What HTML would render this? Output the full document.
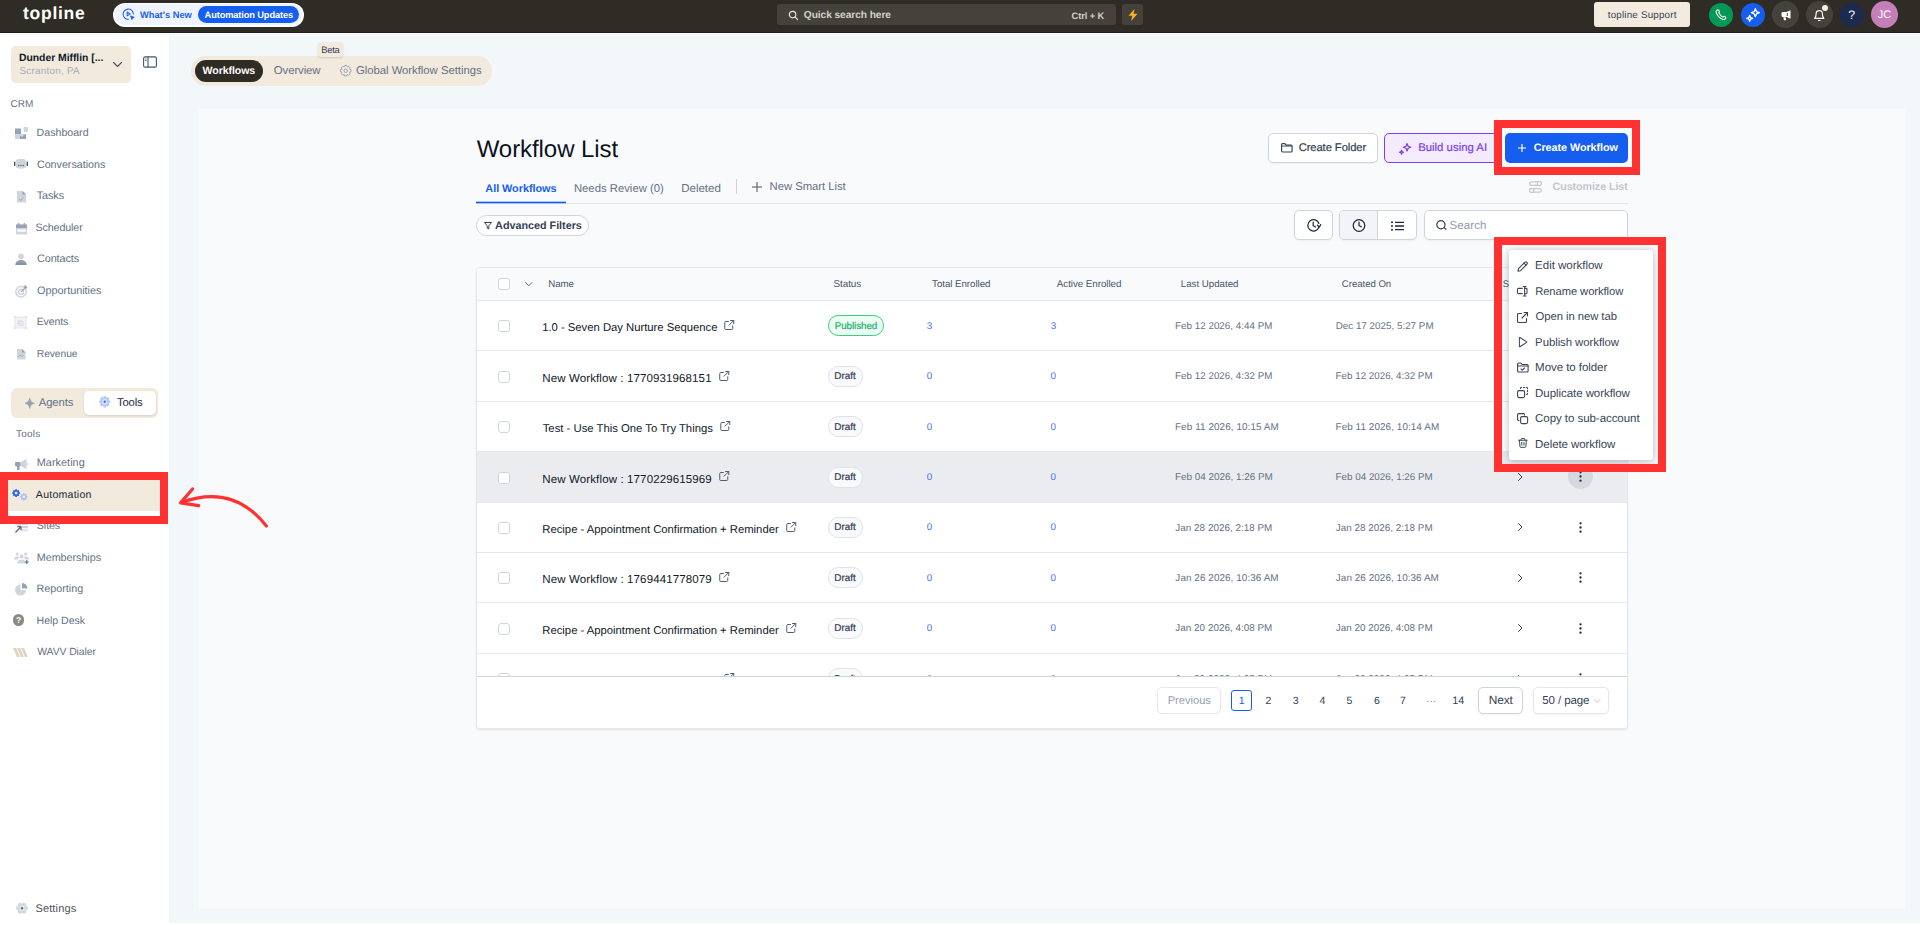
<!DOCTYPE html>
<html lang="en">
<head>
<meta charset="utf-8">
<title>Workflow List</title>
<style>
*{box-sizing:border-box;margin:0;padding:0}
html,body{width:1920px;height:925px;overflow:hidden;background:#fff}
body{font-family:"Liberation Sans",sans-serif;color:#344054;position:relative;font-size:11px;text-rendering:geometricPrecision}
.abs{position:absolute}
.t{position:absolute;white-space:nowrap;line-height:1}
svg{position:absolute;overflow:visible}
</style>
</head>
<body>
<div class="abs" style="left:0px;top:0px;width:1920px;height:32px;background:#2f2c25;"></div>
<div class="abs" style="left:0px;top:32px;width:1920px;height:1px;background:#221f18;"></div>
<div class="abs" style="left:169px;top:34px;width:1751px;height:889px;background:#f2f7fa;"></div>
<div class="abs" style="left:199px;top:109px;width:1706px;height:800px;background:#f9fafb;"></div>
<div class="t" style="left:23.08px;top:5px;font-size:17.5px;color:#fff;font-weight:bold;letter-spacing:0.713px;">topline</div>
<div class="abs" style="left:112.5px;top:2.5px;width:191.0px;height:24.0px;background:#fff;border-radius:12px;"></div>
<div class="abs" style="left:114px;top:4px;width:188px;height:21px;background:#eef3ff;border-radius:10.5px;"></div>
<svg style="left:122px;top:8px" width="13" height="13" viewBox="0 0 24 24" fill="none" stroke="#2563eb" stroke-width="2" stroke-linecap="round" stroke-linejoin="round"><path d="M21 11a9.500 9.500 0 1 0-9.500 10"/><path d="M9.500 7.500v7l5.500-3.500z"/><path d="M16 15l6 2.200-2.600 1.100-1.100 2.700z" fill="#2563eb"/></svg>
<div class="t" style="left:139.95px;top:11px;font-size:9.3px;color:#1d5fe8;font-weight:bold;letter-spacing:0.005px;">What's New</div>
<div class="abs" style="left:198px;top:6px;width:101px;height:17px;background:#155eef;border-radius:8.5px;"></div>
<div class="t" style="left:204.62px;top:11px;font-size:9.3px;color:#fff;font-weight:bold;letter-spacing:-0.140px;">Automation Updates</div>
<div class="abs" style="left:777px;top:4px;width:338.5px;height:21px;background:#45423b;border-radius:3px;"></div>
<svg style="left:787.5px;top:9.5px" width="10.5" height="10.5" viewBox="0 0 24 24" fill="none" stroke="#e8e8e4" stroke-width="2.600" stroke-linecap="round"><circle cx="10.500" cy="10.500" r="7.500"/><path d="M16.500 16.500L22 22"/></svg>
<div class="t" style="left:803.83px;top:11px;font-size:10.2px;color:#d2d1cd;font-weight:bold;letter-spacing:-0.074px;">Quick search here</div>
<div class="t" style="left:1071.59px;top:12px;font-size:9.3px;color:#d2d1cd;font-weight:bold;letter-spacing:-0.083px;">Ctrl + K</div>
<div class="abs" style="left:1122px;top:4px;width:21px;height:21px;background:#45423b;border-radius:3px;"></div>
<svg style="left:1128px;top:8.5px" width="10" height="12" viewBox="0 0 10 12" ><path d="M6.500 0L0.500 6.800H4.200L3.200 12L9.500 4.800H5.600z" fill="#fdb022"/></svg>
<div class="abs" style="left:1594px;top:2px;width:96px;height:25px;background:#f2ebde;border-radius:3px;"></div>
<div class="t" style="left:1607.83px;top:11px;font-size:9.8px;color:#3a4252;letter-spacing:0.187px;">topline Support</div>
<div class="abs" style="left:1709px;top:3px;width:24px;height:24px;background:#039855;border-radius:12px;"></div>
<svg style="left:1714.5px;top:8.5px" width="13" height="13" viewBox="0 0 24 24" fill="none" stroke="#fff" stroke-width="2" stroke-linecap="round" stroke-linejoin="round"><path d="M8.380 8.853a12.500 12.500 0 0 0 2.400 3.400 12.500 12.500 0 0 0 3.400 2.400c.1.050.16.070.23.090.24.070.53.020.73-.12.060-.04.110-.09.210-.19.310-.31.460-.46.610-.56a2 2 0 0 1 2.180 0c.15.100.3.250.61.560l.17.170c.47.470.7.700.83.950a2 2 0 0 1 0 1.800c-.13.250-.36.480-.83.950l-.14.140c-.47.470-.7.700-1.020.88-.35.200-.9.340-1.300.34-.37 0-.62-.070-1.120-.21a19.030 19.030 0 0 1-8.280-4.870 19.030 19.030 0 0 1-4.870-8.280c-.14-.5-.21-.750-.21-1.120 0-.4.140-.95.340-1.300.18-.32.410-.55.880-1.020l.14-.14c.47-.47.700-.7.950-.83a2 2 0 0 1 1.800 0c.25.130.48.360.95.830l.17.170c.31.310.46.460.56.610a2 2 0 0 1 0 2.180c-.1.150-.25.300-.56.610-.1.100-.15.150-.19.210-.14.200-.19.490-.12.730.2.070.4.130.9.230z"/></svg>
<div class="abs" style="left:1741px;top:3px;width:24px;height:24px;background:#155eef;border-radius:12px;"></div>
<svg style="left:1745px;top:7px" width="16" height="16" viewBox="0 0 24 24" fill="none" stroke="#fff" stroke-width="2" stroke-linejoin="round"><path d="M15.500 2.500l1.700 4.300 4.300 1.700-4.300 1.700-1.700 4.300-1.700-4.300-4.300-1.700 4.300-1.700z"/><path d="M7 12.500l1.200 3.300 3.300 1.200-3.300 1.200L7 21.500l-1.200-3.300-3.300-1.200 3.300-1.200z"/></svg>
<div class="abs" style="left:1772px;top:1px;width:27px;height:27px;background:#45423b;border-radius:13.5px;"></div>
<svg style="left:1779.5px;top:8.5px" width="12" height="12" viewBox="0 0 24 24" ><path d="M21 2.500v17l-8-3.500H5.500a2.500 2.500 0 0 1-2.500-2.500v-5A2.500 2.500 0 0 1 5.500 6H13z" fill="#fff"/><path d="M6.500 16.500h5l1 6h-4.500z" fill="#fff"/><path d="M14.500 8v6" stroke="#45423b" stroke-width="2"/></svg>
<div class="abs" style="left:1806px;top:1px;width:27px;height:27px;background:#45423b;border-radius:13.5px;"></div>
<svg style="left:1813px;top:8.5px" width="12.5" height="13" viewBox="0 0 24 24" fill="none" stroke="#fff" stroke-width="2.200" stroke-linecap="round" stroke-linejoin="round"><path d="M18 8.500a6 6 0 0 0-12 0c0 7-3 9-3 9h18s-3-2-3-9z"/><path d="M10.500 21.500h3"/></svg>
<div class="abs" style="left:1822px;top:4.8px;width:6.4px;height:6.4px;background:#f7efe2;border-radius:3.2px;"></div>
<div class="abs" style="left:1840px;top:3px;width:24px;height:24px;background:#1d2a4f;border-radius:12px;"></div>
<div class="t" style="left:1848.28px;top:9px;font-size:12.3px;color:#fff;">?</div>
<div class="abs" style="left:1871px;top:1px;width:27px;height:27px;background:#c57fb8;border-radius:13.5px;"></div>
<div class="t" style="left:1877.68px;top:10px;font-size:11px;color:#fff;">JC</div>
<div class="abs" style="left:11px;top:46px;width:120px;height:37px;background:#f1eadd;border-radius:5px;"></div>
<div class="t" style="left:19.02px;top:54px;font-size:10.4px;color:#101828;font-weight:bold;letter-spacing:-0.033px;">Dunder Mifflin [...</div>
<div class="t" style="left:19.41px;top:67px;font-size:9.9px;color:#a5acb9;letter-spacing:0.252px;">Scranton, PA</div>
<svg style="left:113px;top:62px" width="9" height="5" viewBox="0 0 9 5" fill="none" stroke="#475467" stroke-width="1.100" stroke-linecap="round" stroke-linejoin="round"><path d="M0.500 0.500L4.500 4.500L8.500 0.500"/></svg>
<svg style="left:143px;top:56.2px" width="14" height="12" viewBox="0 0 14 11.5" fill="none" stroke="#475467" stroke-width="1.100"><rect x="0.600" y="0.600" width="12.800" height="10.300" rx="1.500"/><path d="M5 0.600v10.300"/><path d="M2.200 2.800h1.200M2.200 4.300h1.200"/></svg>
<div class="t" style="left:10.50px;top:100px;font-size:10px;color:#667085;letter-spacing:0.073px;">CRM</div>
<div class="t" style="left:36.62px;top:128px;font-size:10.6px;color:#667085;letter-spacing:0.015px;">Dashboard</div>
<div class="t" style="left:36.97px;top:160px;font-size:10.7px;color:#667085;letter-spacing:-0.005px;">Conversations</div>
<div class="t" style="left:36.75px;top:191px;font-size:10.9px;color:#667085;letter-spacing:-0.121px;">Tasks</div>
<div class="t" style="left:35.48px;top:223px;font-size:10.7px;color:#667085;letter-spacing:-0.105px;">Scheduler</div>
<div class="t" style="left:36.96px;top:254px;font-size:10.9px;color:#667085;letter-spacing:-0.121px;">Contacts</div>
<div class="t" style="left:37.09px;top:286px;font-size:10.9px;color:#667085;letter-spacing:-0.032px;">Opportunities</div>
<div class="t" style="left:36.72px;top:317px;font-size:10.5px;color:#667085;letter-spacing:-0.107px;">Events</div>
<div class="t" style="left:36.77px;top:350px;font-size:10.3px;color:#667085;letter-spacing:-0.074px;">Revenue</div>
<svg style="left:15px;top:127px" width="13" height="12" viewBox="0 0 13 12" ><rect x="0" y="1.500" width="6" height="5.500" fill="#98a2b3"/><rect x="0" y="7" width="11" height="5" fill="#d0d5dd"/><path d="M5 12V8.500l2 1.500 3-3 1 1v4z" fill="#98a2b3"/><rect x="8.500" y="0" width="4.500" height="5" rx="1" fill="#d0d5dd"/></svg>
<svg style="left:13.5px;top:159px" width="14" height="10" viewBox="0 0 14 10" ><rect x="1.500" y="0" width="11" height="9.500" rx="3.500" fill="#d0d5dd"/><rect x="0" y="2.500" width="1.300" height="4.500" rx="0.600" fill="#475467"/><rect x="12.700" y="2.500" width="1.300" height="4.500" rx="0.600" fill="#475467"/><circle cx="4.800" cy="6.500" r="0.650" fill="#475467"/><circle cx="7" cy="6.500" r="0.650" fill="#475467"/><circle cx="9.200" cy="6.500" r="0.650" fill="#475467"/></svg>
<svg style="left:17px;top:190.5px" width="9" height="11.5" viewBox="0 0 9 11.5" ><path d="M0 0h5.500L9 3.500V11.500H0z" fill="#d0d5dd"/><path d="M5.500 0L9 3.500H5.500z" fill="#98a2b3"/><path d="M2.300 8l1.500 1.500 2.700-3" stroke="#98a2b3" stroke-width="0.900" fill="none"/></svg>
<svg style="left:16px;top:222.5px" width="11" height="11.5" viewBox="0 0 11 11.5" ><rect x="0" y="1.500" width="11" height="10" rx="1" fill="#d0d5dd"/><rect x="0" y="1.500" width="11" height="3.500" fill="#98a2b3"/><rect x="2" y="0" width="1.300" height="2.500" fill="#98a2b3"/><rect x="7.700" y="0" width="1.300" height="2.500" fill="#98a2b3"/><rect x="1.300" y="6.500" width="8.400" height="2.200" fill="#fff"/></svg>
<svg style="left:15px;top:253px" width="12" height="12" viewBox="0 0 12 12" ><circle cx="6" cy="3.200" r="2.800" fill="#d0d5dd"/><path d="M0.500 12c0-3.200 2.300-5 5.500-5s5.500 1.800 5.500 5z" fill="#98a2b3"/><path d="M0.500 12c0-1 .3-2 .8-2.600h9.400c.5.600.8 1.600.8 2.600z" fill="#8a93a6"/></svg>
<svg style="left:15.2px;top:285px" width="12.5" height="12.5" viewBox="0 0 12.5 12.5" ><circle cx="6" cy="6.800" r="5.200" fill="none" stroke="#cfd4dc" stroke-width="1.500"/><circle cx="6" cy="6.800" r="2.500" fill="none" stroke="#cfd4dc" stroke-width="1.400"/><path d="M6 6.800L10.500 2.300" stroke="#98a2b3" stroke-width="1.200"/><path d="M8.500 1.500L11 0l.3 1.700 1.200.3-1.500 2z" fill="#98a2b3"/></svg>
<svg style="left:14px;top:316px" width="13" height="13" viewBox="0 0 13 13" ><rect x="1" y="1" width="11" height="11" fill="#f2f4f7" stroke="#e4e7ec" stroke-width="1"/><rect x="3.300" y="3.800" width="5" height="5" fill="#dfe3ea"/><rect x="5" y="5.500" width="4.200" height="4.200" fill="#e6e9ee" stroke="#d9dde5" stroke-width="0.600"/><rect x="0" y="0" width="2.200" height="2.200" fill="#dfe3ea"/><rect x="10.800" y="0" width="2.200" height="2.200" fill="#dfe3ea"/><rect x="0" y="10.800" width="2.200" height="2.200" fill="#dfe3ea"/><rect x="10.800" y="10.800" width="2.200" height="2.200" fill="#dfe3ea"/></svg>
<svg style="left:17px;top:349px" width="8.5" height="10.5" viewBox="0 0 8.5 10.5" ><path d="M0 0h5L8.500 3.500V10.500H0z" fill="#d0d5dd"/><path d="M5 0L8.500 3.500H5z" fill="#98a2b3"/><path d="M1.500 7.500l1.500-1.500 1.500 1.200 2-0.700" stroke="#98a2b3" stroke-width="0.800" fill="none"/></svg>
<div class="abs" style="left:11px;top:388px;width:147px;height:30px;background:#f1eadd;border-radius:6px;"></div>
<div class="abs" style="left:84px;top:391px;width:71.5px;height:24px;background:#fff;border-radius:5px;box-shadow:0 1px 2px rgba(16,24,40,.12);"></div>
<svg style="left:25px;top:397.5px" width="9.5" height="10.5" viewBox="0 0 10 11" ><path d="M5 0C5.700 3.200 6.800 4.500 10 5.500C6.800 6.500 5.700 7.800 5 11C4.300 7.800 3.200 6.500 0 5.500C3.200 4.500 4.300 3.200 5 0z" fill="#98a2b3" stroke="#98a2b3" stroke-width="0.600"/></svg>
<div class="t" style="left:38.77px;top:398px;font-size:11.3px;color:#667085;letter-spacing:-0.130px;">Agents</div>
<svg style="left:99px;top:396.2px" width="11.5" height="11.5" viewBox="0 0 24 24" ><path d="M20.38 8.72L23.77 9.66L23.77 14.34L20.38 15.28L20.25 15.61L21.98 18.67L18.67 21.98L15.61 20.25L15.28 20.38L14.34 23.77L9.66 23.77L8.72 20.38L8.39 20.25L5.33 21.98L2.02 18.67L3.75 15.61L3.62 15.28L0.23 14.34L0.23 9.66L3.62 8.72L3.75 8.39L2.02 5.33L5.33 2.02L8.39 3.75L8.72 3.62L9.66 0.23L14.34 0.23L15.28 3.62L15.61 3.75L18.67 2.02L21.98 5.33L20.25 8.39z" fill="#b4c9fb"/><circle cx="12" cy="12" r="6" fill="#d3e0fd"/><circle cx="12" cy="12" r="2.400" fill="#3b6ff5"/></svg>
<div class="t" style="left:117.00px;top:398px;font-size:11.3px;color:#1d2939;letter-spacing:-0.155px;">Tools</div>
<div class="t" style="left:16.05px;top:430px;font-size:10px;color:#667085;letter-spacing:0.215px;">Tools</div>
<div class="t" style="left:36.75px;top:458px;font-size:10.9px;color:#667085;letter-spacing:0.021px;">Marketing</div>
<div class="abs" style="left:5px;top:478px;width:158px;height:32.5px;background:#f1eadd;border-radius:4px;"></div>
<div class="t" style="left:35.86px;top:490px;font-size:10.6px;color:#1d2939;letter-spacing:0.215px;">Automation</div>
<svg style="left:11.5px;top:489.3px" width="8.2" height="8.2" viewBox="0 0 24 24" ><path d="M19.73 8.97L23.28 9.76L23.28 14.24L19.73 15.03L19.60 15.33L21.56 18.39L18.39 21.56L15.33 19.60L15.03 19.73L14.24 23.28L9.76 23.28L8.97 19.73L8.67 19.60L5.61 21.56L2.44 18.39L4.40 15.33L4.27 15.03L0.72 14.24L0.72 9.76L4.27 8.97L4.40 8.67L2.44 5.61L5.61 2.44L8.67 4.40L8.97 4.27L9.76 0.72L14.24 0.72L15.03 4.27L15.33 4.40L18.39 2.44L21.56 5.61L19.60 8.67z" fill="#2f63ee"/><circle cx="12" cy="12" r="4.2" fill="#f1eadd"/></svg>
<svg style="left:19.6px;top:493.3px" width="7.7" height="7.7" viewBox="0 0 24 24" ><path d="M19.73 8.97L23.28 9.76L23.28 14.24L19.73 15.03L19.60 15.33L21.56 18.39L18.39 21.56L15.33 19.60L15.03 19.73L14.24 23.28L9.76 23.28L8.97 19.73L8.67 19.60L5.61 21.56L2.44 18.39L4.40 15.33L4.27 15.03L0.72 14.24L0.72 9.76L4.27 8.97L4.40 8.67L2.44 5.61L5.61 2.44L8.67 4.40L8.97 4.27L9.76 0.72L14.24 0.72L15.03 4.27L15.33 4.40L18.39 2.44L21.56 5.61L19.60 8.67z" fill="#a9c1fb"/><circle cx="12" cy="12" r="4.2" fill="#f1eadd"/></svg>
<div class="t" style="left:36.83px;top:521px;font-size:10.7px;color:#667085;letter-spacing:-0.096px;">Sites</div>
<div class="t" style="left:36.75px;top:553px;font-size:10.8px;color:#667085;letter-spacing:-0.047px;">Memberships</div>
<div class="t" style="left:36.62px;top:584px;font-size:10.7px;color:#667085;letter-spacing:0.021px;">Reporting</div>
<div class="t" style="left:36.62px;top:616px;font-size:10.6px;color:#667085;letter-spacing:-0.046px;">Help Desk</div>
<div class="t" style="left:37.25px;top:648px;font-size:10.4px;color:#667085;letter-spacing:-0.086px;">WAVV Dialer</div>
<svg style="left:15px;top:458.5px" width="13" height="11" viewBox="0 0 13 11" ><path d="M5.500 3L11.500 0v10L5.500 7z" fill="#d0d5dd"/><rect x="0" y="3" width="5.500" height="4.500" rx="1" fill="#98a2b3"/><rect x="2" y="7" width="2.500" height="4" fill="#98a2b3"/><rect x="11.800" y="3.500" width="1.200" height="3" fill="#d0d5dd"/></svg>
<svg style="left:15px;top:523px" width="13" height="10" viewBox="0 0 13 10" ><rect x="0" y="0" width="13" height="2" fill="#d0d5dd"/><rect x="5" y="3" width="8" height="2.200" fill="#d0d5dd"/><rect x="6" y="6" width="7" height="2.500" fill="#e4e7ec"/><path d="M0.500 9.500L6 3.500M6 3.500H2.200M6 3.500V7.200" stroke="#667085" stroke-width="1.400" fill="none"/></svg>
<svg style="left:14px;top:552px" width="15" height="12" viewBox="0 0 15 12" ><circle cx="3.300" cy="2" r="1.600" fill="#d0d5dd"/><circle cx="11.700" cy="2" r="1.600" fill="#d0d5dd"/><circle cx="7.500" cy="4.500" r="2" fill="#d0d5dd"/><path d="M0 7.500c0-2 1.300-3 3.300-3 .8 0 1.500.2 2 .5-.8.800-1.200 1.700-1.300 2.500z" fill="#d0d5dd"/><path d="M15 7.500c0-2-1.300-3-3.300-3-.8 0-1.500.2-2 .5.800.800 1.200 1.700 1.300 2.500z" fill="#d0d5dd"/><path d="M3.200 11.500c0-2.700 1.700-4 4.300-4s4.300 1.300 4.300 4z" fill="#d0d5dd"/><path d="M12.800 8v4M10.800 10h4" stroke="#667085" stroke-width="1.200"/></svg>
<svg style="left:14.8px;top:583px" width="12.5" height="12.5" viewBox="0 0 12.5 12.5" ><path d="M5.500 1.500A5.500 5.500 0 1 0 11 7H5.500z" fill="#d0d5dd"/><path d="M7 0a5.500 5.500 0 0 1 5.500 5.500H7z" fill="#98a2b3"/></svg>
<div class="abs" style="left:13px;top:614px;width:11px;height:11.5px;background:#8a8984;border-radius:6px;"></div>
<div class="t" style="left:15.88px;top:616px;font-size:8.5px;color:#fff;font-weight:bold;">?</div>
<svg style="left:13px;top:648px" width="15" height="9" viewBox="0 0 15 9" ><path d="M0 0h3L7 9H4z" fill="#ddd3bf"/><path d="M4 0h3L11 9H8z" fill="#ddd3bf"/><path d="M8 0h3L15 9H12z" fill="#ddd3bf"/></svg>
<svg style="left:15.5px;top:902.3px" width="12" height="12.4" viewBox="0 0 24 24" ><path d="M19.91 7.71L23.59 8.89L23.59 15.11L19.91 16.29L19.67 16.70L20.49 20.49L15.11 23.59L12.24 21.00L11.76 21.00L8.89 23.59L3.51 20.49L4.33 16.70L4.09 16.29L0.41 15.11L0.41 8.89L4.09 7.71L4.33 7.30L3.51 3.51L8.89 0.41L11.76 3.00L12.24 3.00L15.11 0.41L20.49 3.51L19.67 7.30z" fill="#d3d7df"/><circle cx="12" cy="12" r="5.500" fill="#e4e7ec"/><circle cx="12" cy="12" r="2.400" fill="#667085"/></svg>
<div class="t" style="left:35.40px;top:904px;font-size:11px;color:#4d5157;letter-spacing:0.148px;">Settings</div>
<div class="abs" style="left:191px;top:56px;width:301px;height:29.5px;background:#f1eadd;border-radius:14.75px;"></div>
<div class="abs" style="left:195px;top:60px;width:68px;height:22px;background:#2f2c25;border-radius:11px;"></div>
<div class="t" style="left:202.56px;top:66px;font-size:10.6px;color:#fff;font-weight:bold;letter-spacing:-0.081px;">Workflows</div>
<div class="t" style="left:273.84px;top:66px;font-size:11.4px;color:#667085;letter-spacing:-0.113px;">Overview</div>
<svg style="left:340px;top:65px" width="11.5" height="11.5" viewBox="0 0 24 24" fill="none" stroke="#98a2b3" stroke-width="1.900" stroke-linejoin="round"><path d="M20.01 8.87L22.98 9.81L22.98 14.19L20.01 15.13L19.88 15.45L21.31 18.22L18.22 21.31L15.45 19.88L15.13 20.01L14.19 22.98L9.81 22.98L8.87 20.01L8.55 19.88L5.78 21.31L2.69 18.22L4.12 15.45L3.99 15.13L1.02 14.19L1.02 9.81L3.99 8.87L4.12 8.55L2.69 5.78L5.78 2.69L8.55 4.12L8.87 3.99L9.81 1.02L14.19 1.02L15.13 3.99L15.45 4.12L18.22 2.69L21.31 5.78L19.88 8.55z"/><circle cx="12" cy="12" r="3.600"/></svg>
<div class="t" style="left:356.01px;top:66px;font-size:11.3px;color:#667085;letter-spacing:-0.018px;">Global Workflow Settings</div>
<div class="abs" style="left:318px;top:42px;width:25px;height:15.3px;background:#f1eadd;border-radius:3px;box-shadow:0 1px 2px rgba(16,24,40,.15);"></div>
<div class="t" style="left:321.28px;top:46px;font-size:9.3px;color:#344054;letter-spacing:-0.251px;">Beta</div>
<div class="t" style="left:476.69px;top:138px;font-size:24px;color:#0c111d;letter-spacing:-0.062px;">Workflow List</div>
<div class="abs" style="left:1268px;top:133px;width:110px;height:30px;background:#fff;border:1px solid #d0d5dd;border-radius:5px;box-shadow:0 1px 2px rgba(16,24,40,.05);"></div>
<svg style="left:1280.5px;top:143px" width="11.5" height="9.5" viewBox="0 0 11.5 9.5" fill="none" stroke="#344054" stroke-width="1.150" stroke-linejoin="round"><path d="M0.600 2.600V1.600a1 1 0 0 1 1-1h2.300l1.200 1.500h5a1 1 0 0 1 1 1V8a1 1 0 0 1-1 1H1.600a1 1 0 0 1-1-1V2.600z"/><path d="M0.600 3.100h10.400" stroke-width="0.900"/></svg>
<div class="t" style="left:1298.63px;top:143px;font-size:11.2px;color:#344054;letter-spacing:-0.065px;-webkit-text-stroke:0.200px #344054;">Create Folder</div>
<div class="abs" style="left:1384px;top:133px;width:114px;height:30px;background:#f4ebff;border:1px solid #7a3ff2;border-radius:5px;"></div>
<svg style="left:1397.5px;top:141.5px" width="14" height="14" viewBox="0 0 24 24" fill="none" stroke="#7a3ff2" stroke-width="2" stroke-linejoin="round"><path d="M15.500 2.500l1.800 4.700 4.700 1.800-4.700 1.800-1.800 4.700-1.800-4.700-4.700-1.800 4.700-1.800z"/><path d="M6 14l1 2.500 2.500 1-2.500 1L6 21l-1-2.500-2.500-1 2.500-1z"/></svg>
<div class="t" style="left:1418.14px;top:143px;font-size:11.3px;color:#7a3ff2;letter-spacing:0.039px;-webkit-text-stroke:0.200px #7a3ff2;">Build using AI</div>
<div class="abs" style="left:1505px;top:133px;width:123px;height:30px;background:#155eef;border-radius:5px;"></div>
<svg style="left:1518px;top:144px" width="8" height="8" viewBox="0 0 8 8" ><path d="M4 0v8M0 4h8" stroke="#fff" stroke-width="1.200"/></svg>
<div class="t" style="left:1533.73px;top:143px;font-size:10.8px;color:#fff;font-weight:bold;letter-spacing:-0.055px;">Create Workflow</div>
<svg style="left:1529px;top:181px" width="13" height="12" viewBox="0 0 13 12" fill="none" stroke="#c3c8d2" stroke-width="1.200"><rect x="0.600" y="0.800" width="11.800" height="3.600" rx="1.800"/><circle cx="10.300" cy="2.600" r="2.100" fill="#f9fafb"/><rect x="0.600" y="7.600" width="11.800" height="3.600" rx="1.800"/><circle cx="2.700" cy="9.400" r="2.100" fill="#f9fafb"/></svg>
<div class="t" style="left:1552.58px;top:182px;font-size:10.7px;color:#c1c6d0;font-weight:bold;letter-spacing:-0.067px;">Customize List</div>
<div class="t" style="left:485.37px;top:184px;font-size:10.9px;color:#155eef;font-weight:bold;letter-spacing:-0.057px;">All Workflows</div>
<div class="abs" style="left:476px;top:203px;width:1152px;height:1px;background:#e4e7ec;"></div>
<div class="abs" style="left:476px;top:202px;width:90px;height:1px;background:#155eef;"></div>
<div class="abs" style="left:476px;top:201px;width:90px;height:1px;background:rgba(21,94,239,.35);"></div>
<div class="abs" style="left:476px;top:203px;width:90px;height:1px;background:rgba(21,94,239,.30);"></div>
<div class="t" style="left:573.91px;top:184px;font-size:11.3px;color:#667085;letter-spacing:0.008px;">Needs Review (0)</div>
<div class="t" style="left:681.27px;top:184px;font-size:11.5px;color:#667085;letter-spacing:-0.013px;">Deleted</div>
<div class="abs" style="left:736px;top:179px;width:1px;height:14.5px;background:#d0d5dd;"></div>
<svg style="left:751.5px;top:182px" width="10" height="10" viewBox="0 0 10 10" ><path d="M5 0v10M0 5h10" stroke="#475467" stroke-width="1"/></svg>
<div class="t" style="left:769.62px;top:182px;font-size:11.3px;color:#667085;letter-spacing:-0.034px;">New Smart List</div>
<div class="abs" style="left:476px;top:215px;width:113px;height:21px;background:#fff;border:1px solid #d0d5dd;border-radius:10.5px;"></div>
<svg style="left:483.5px;top:222px" width="8" height="7.5" viewBox="0 0 8 7.5" fill="none" stroke="#344054" stroke-width="1" stroke-linejoin="round"><path d="M0.500 0.500h7L4.800 3.800V7L3.200 6V3.800z"/></svg>
<div class="t" style="left:495.10px;top:221px;font-size:10.8px;color:#344054;font-weight:bold;letter-spacing:-0.015px;">Advanced Filters</div>
<div class="abs" style="left:1294px;top:210px;width:39px;height:30px;background:#fff;border:1px solid #d0d5dd;border-radius:5px;box-shadow:0 1px 2px rgba(16,24,40,.05);"></div>
<div class="abs" style="left:1339px;top:210px;width:78px;height:30px;background:#fff;border:1px solid #d0d5dd;border-radius:5px;box-shadow:0 1px 2px rgba(16,24,40,.05);"></div>
<div class="abs" style="left:1340px;top:211px;width:37.5px;height:28px;background:#f2f4f7;border-radius:4px 0 0 4px;"></div>
<div class="abs" style="left:1377px;top:211px;width:1px;height:28px;background:#d0d5dd;"></div>
<svg style="left:1307px;top:219px" width="14" height="13" viewBox="0 0 14 13" fill="none" stroke="#1d2939" stroke-width="1.250" stroke-linecap="round" stroke-linejoin="round"><path d="M11.800 8.500A5.700 5.700 0 1 1 11.900 4.500"/><path d="M6.200 3.200v3.500l2.300 1.300"/><path d="M10.300 6.200l2.100 1.800 1.300-2.400" /></svg>
<svg style="left:1351.5px;top:219px" width="14" height="13" viewBox="0 0 14 13" fill="none" stroke="#1d2939" stroke-width="1.250" stroke-linecap="round" stroke-linejoin="round"><circle cx="7" cy="6.500" r="5.800"/><path d="M7 3v3.500l2.300 1.300"/></svg>
<svg style="left:1391px;top:220.5px" width="13" height="10" viewBox="0 0 13 10" ><path d="M4 1.300h9M4 5h9M4 8.700h9" stroke="#1d2939" stroke-width="1.300"/><circle cx="1" cy="1.300" r="1" fill="#1d2939"/><circle cx="1" cy="5" r="1" fill="#1d2939"/><circle cx="1" cy="8.700" r="1" fill="#1d2939"/></svg>
<div class="abs" style="left:1424px;top:210px;width:204px;height:30px;background:#fff;border:1px solid #d0d5dd;border-radius:5px;box-shadow:0 1px 2px rgba(16,24,40,.05);"></div>
<svg style="left:1435.5px;top:220.2px" width="10.8" height="9.8" viewBox="0 0 11 10" fill="none" stroke="#344054" stroke-width="1.200" stroke-linecap="round"><circle cx="5" cy="4.800" r="4.200"/><path d="M8.200 7.800l2 1.700"/></svg>
<div class="t" style="left:1449.49px;top:221px;font-size:11.5px;color:#8e98aa;letter-spacing:0.119px;">Search</div>
<div class="abs" style="left:476px;top:267px;width:1152px;height:462px;background:#fff;border:1px solid #e4e7ec;border-radius:4px;box-shadow:0 1px 2px rgba(16,24,40,.10);"></div>
<div class="abs" style="left:477px;top:268px;width:1150px;height:32px;background:#f9fafb;border-radius:3px 3px 0 0;"></div>
<div class="abs" style="left:477px;top:300px;width:1150px;height:1px;background:#e4e7ec;"></div>
<div class="abs" style="left:498px;top:278px;width:12px;height:12px;background:#fff;border:1px solid #d0d5dd;border-radius:3px;"></div>
<svg style="left:525px;top:282px" width="7.5" height="4.5" viewBox="0 0 7.5 4.5" fill="none" stroke="#667085" stroke-width="1" stroke-linecap="round" stroke-linejoin="round"><path d="M0.500 0.500L3.750 3.800L7 0.500"/></svg>
<div class="t" style="left:548.35px;top:280px;font-size:9.7px;color:#475467;letter-spacing:-0.084px;">Name</div>
<div class="t" style="left:833.41px;top:280px;font-size:9.9px;color:#475467;letter-spacing:-0.029px;">Status</div>
<div class="t" style="left:932.07px;top:280px;font-size:9.7px;color:#475467;letter-spacing:-0.028px;">Total Enrolled</div>
<div class="t" style="left:1056.80px;top:280px;font-size:9.8px;color:#475467;letter-spacing:-0.050px;">Active Enrolled</div>
<div class="t" style="left:1180.82px;top:280px;font-size:9.7px;color:#475467;">Last Updated</div>
<div class="t" style="left:1341.82px;top:280px;font-size:9.6px;color:#475467;letter-spacing:-0.024px;">Created On</div>
<div class="t" style="left:1502.69px;top:280px;font-size:9.5px;color:#475467;">S</div>
<div class="abs" style="left:0;top:0;width:1920px;height:676px;overflow:hidden">
<div class="abs" style="left:498px;top:320px;width:12px;height:12px;background:#fff;border:1px solid #d0d5dd;border-radius:3px;"></div>
<div class="t" style="left:542.21px;top:323px;font-size:11.3px;color:#101828;letter-spacing:-0.018px;">1.0 - Seven Day Nurture Sequence</div>
<svg style="left:723.7px;top:320.2px" width="10.5" height="10" viewBox="0 0 10 10" fill="none" stroke="#475467" stroke-width="0.950" stroke-linecap="round" stroke-linejoin="round"><path d="M8.500 5.800V8.500a1 1 0 0 1-1 1H1.500a1 1 0 0 1-1-1V2.500a1 1 0 0 1 1-1H4.200"/><path d="M6.300 0.500H9.500V3.700"/><path d="M9.500 0.500L4.800 5.200"/></svg>
<div class="abs" style="left:828px;top:315px;width:56px;height:20.5px;background:#ecfdf3;border:1px solid #3ccb7f;border-radius:10.25px;"></div>
<div class="t" style="left:834.70px;top:322px;font-size:9.8px;color:#17b26a;letter-spacing:-0.051px;-webkit-text-stroke:0.200px #17b26a;">Published</div>
<div class="t" style="left:926.69px;top:322px;font-size:9.8px;color:#4c6ef5;">3</div>
<div class="t" style="left:1050.74px;top:322px;font-size:9.8px;color:#4c6ef5;">3</div>
<div class="t" style="left:1175.06px;top:322px;font-size:9.8px;color:#667085;letter-spacing:0.023px;">Feb 12 2026, 4:44 PM</div>
<div class="t" style="left:1335.66px;top:322px;font-size:9.8px;color:#667085;letter-spacing:0.021px;">Dec 17 2025, 5:27 PM</div>
<svg style="left:1518px;top:321.7px" width="4.5" height="8" viewBox="0 0 4.5 8" fill="none" stroke="#344054" stroke-width="1" stroke-linecap="round" stroke-linejoin="round"><path d="M0.500 0.500L4 4L0.500 7.500"/></svg>
<svg style="left:1579px;top:320.2px" width="3" height="11" viewBox="0 0 3 11" fill="#1d2939"><circle cx="1.500" cy="1.300" r="1.150"/><circle cx="1.500" cy="5.500" r="1.150"/><circle cx="1.500" cy="9.700" r="1.150"/></svg>
<div class="abs" style="left:477px;top:350px;width:1150px;height:1px;background:#e4e7ec;"></div>
<div class="abs" style="left:498px;top:371px;width:12px;height:12px;background:#fff;border:1px solid #d0d5dd;border-radius:3px;"></div>
<div class="t" style="left:542.27px;top:374px;font-size:11.5px;color:#101828;letter-spacing:0.121px;">New Workflow : 1770931968151</div>
<svg style="left:718.7px;top:370.6px" width="10.5" height="10" viewBox="0 0 10 10" fill="none" stroke="#475467" stroke-width="0.950" stroke-linecap="round" stroke-linejoin="round"><path d="M8.500 5.800V8.500a1 1 0 0 1-1 1H1.500a1 1 0 0 1-1-1V2.500a1 1 0 0 1 1-1H4.200"/><path d="M6.300 0.500H9.500V3.700"/><path d="M9.500 0.500L4.800 5.200"/></svg>
<div class="abs" style="left:828px;top:366px;width:35px;height:20.5px;background:#f9fafb;border:1px solid #dfe2e8;border-radius:10.25px;"></div>
<div class="t" style="left:834.35px;top:372px;font-size:9.9px;color:#344054;letter-spacing:0.027px;-webkit-text-stroke:0.200px #344054;">Draft</div>
<div class="t" style="left:926.72px;top:372px;font-size:9.8px;color:#4c6ef5;">0</div>
<div class="t" style="left:1050.62px;top:372px;font-size:9.8px;color:#4c6ef5;">0</div>
<div class="t" style="left:1175.06px;top:372px;font-size:9.8px;color:#667085;letter-spacing:0.023px;">Feb 12 2026, 4:32 PM</div>
<div class="t" style="left:1335.60px;top:372px;font-size:9.8px;color:#667085;">Feb 12 2026, 4:32 PM</div>
<svg style="left:1518px;top:372.1px" width="4.5" height="8" viewBox="0 0 4.5 8" fill="none" stroke="#344054" stroke-width="1" stroke-linecap="round" stroke-linejoin="round"><path d="M0.500 0.500L4 4L0.500 7.500"/></svg>
<svg style="left:1579px;top:370.6px" width="3" height="11" viewBox="0 0 3 11" fill="#1d2939"><circle cx="1.500" cy="1.300" r="1.150"/><circle cx="1.500" cy="5.500" r="1.150"/><circle cx="1.500" cy="9.700" r="1.150"/></svg>
<div class="abs" style="left:477px;top:401px;width:1150px;height:1px;background:#e4e7ec;"></div>
<div class="abs" style="left:498px;top:421px;width:12px;height:12px;background:#fff;border:1px solid #d0d5dd;border-radius:3px;"></div>
<div class="t" style="left:542.73px;top:424px;font-size:11.3px;color:#101828;">Test - Use This One To Try Things</div>
<svg style="left:720px;top:421.0px" width="10.5" height="10" viewBox="0 0 10 10" fill="none" stroke="#475467" stroke-width="0.950" stroke-linecap="round" stroke-linejoin="round"><path d="M8.500 5.800V8.500a1 1 0 0 1-1 1H1.500a1 1 0 0 1-1-1V2.500a1 1 0 0 1 1-1H4.200"/><path d="M6.300 0.500H9.500V3.700"/><path d="M9.500 0.500L4.800 5.200"/></svg>
<div class="abs" style="left:828px;top:416px;width:35px;height:20.5px;background:#f9fafb;border:1px solid #dfe2e8;border-radius:10.25px;"></div>
<div class="t" style="left:834.35px;top:423px;font-size:9.9px;color:#344054;letter-spacing:0.027px;-webkit-text-stroke:0.200px #344054;">Draft</div>
<div class="t" style="left:926.72px;top:423px;font-size:9.8px;color:#4c6ef5;">0</div>
<div class="t" style="left:1050.62px;top:423px;font-size:9.8px;color:#4c6ef5;">0</div>
<div class="t" style="left:1175.01px;top:423px;font-size:9.9px;color:#667085;letter-spacing:0.092px;">Feb 11 2026, 10:15 AM</div>
<div class="t" style="left:1335.54px;top:423px;font-size:9.9px;color:#667085;letter-spacing:0.082px;">Feb 11 2026, 10:14 AM</div>
<svg style="left:1518px;top:422.5px" width="4.5" height="8" viewBox="0 0 4.5 8" fill="none" stroke="#344054" stroke-width="1" stroke-linecap="round" stroke-linejoin="round"><path d="M0.500 0.500L4 4L0.500 7.500"/></svg>
<svg style="left:1579px;top:421.0px" width="3" height="11" viewBox="0 0 3 11" fill="#1d2939"><circle cx="1.500" cy="1.300" r="1.150"/><circle cx="1.500" cy="5.500" r="1.150"/><circle cx="1.500" cy="9.700" r="1.150"/></svg>
<div class="abs" style="left:477px;top:451px;width:1150px;height:51px;background:#eaecf0;"></div>
<div class="abs" style="left:477px;top:451px;width:1150px;height:1px;background:#e4e7ec;"></div>
<div class="abs" style="left:498px;top:472px;width:12px;height:12px;background:#fff;border:1px solid #d0d5dd;border-radius:3px;"></div>
<div class="t" style="left:542.27px;top:475px;font-size:11.5px;color:#101828;letter-spacing:0.129px;">New Workflow : 1770229615969</div>
<svg style="left:718.8px;top:471.4px" width="10.5" height="10" viewBox="0 0 10 10" fill="none" stroke="#475467" stroke-width="0.950" stroke-linecap="round" stroke-linejoin="round"><path d="M8.500 5.800V8.500a1 1 0 0 1-1 1H1.500a1 1 0 0 1-1-1V2.500a1 1 0 0 1 1-1H4.200"/><path d="M6.300 0.500H9.500V3.700"/><path d="M9.500 0.500L4.800 5.200"/></svg>
<div class="abs" style="left:828px;top:467px;width:35px;height:20.5px;background:#f9fafb;border:1px solid #dfe2e8;border-radius:10.25px;"></div>
<div class="t" style="left:834.35px;top:473px;font-size:9.9px;color:#344054;letter-spacing:0.027px;-webkit-text-stroke:0.200px #344054;">Draft</div>
<div class="t" style="left:926.72px;top:473px;font-size:9.8px;color:#4c6ef5;">0</div>
<div class="t" style="left:1050.62px;top:473px;font-size:9.8px;color:#4c6ef5;">0</div>
<div class="t" style="left:1175.01px;top:473px;font-size:9.9px;color:#667085;">Feb 04 2026, 1:26 PM</div>
<div class="t" style="left:1335.60px;top:473px;font-size:9.8px;color:#667085;letter-spacing:0.009px;">Feb 04 2026, 1:26 PM</div>
<div class="abs" style="left:1568px;top:464px;width:25px;height:25px;background:#d5d9df;border-radius:12.5px;"></div>
<svg style="left:1518px;top:472.9px" width="4.5" height="8" viewBox="0 0 4.5 8" fill="none" stroke="#344054" stroke-width="1" stroke-linecap="round" stroke-linejoin="round"><path d="M0.500 0.500L4 4L0.500 7.500"/></svg>
<svg style="left:1579px;top:471.4px" width="3" height="11" viewBox="0 0 3 11" fill="#1d2939"><circle cx="1.500" cy="1.300" r="1.150"/><circle cx="1.500" cy="5.500" r="1.150"/><circle cx="1.500" cy="9.700" r="1.150"/></svg>
<div class="abs" style="left:477px;top:502px;width:1150px;height:1px;background:#e4e7ec;"></div>
<div class="abs" style="left:498px;top:522px;width:12px;height:12px;background:#fff;border:1px solid #d0d5dd;border-radius:3px;"></div>
<div class="t" style="left:542.33px;top:525px;font-size:11.3px;color:#101828;letter-spacing:-0.016px;">Recipe - Appointment Confirmation + Reminder</div>
<svg style="left:786.3px;top:521.8px" width="10.5" height="10" viewBox="0 0 10 10" fill="none" stroke="#475467" stroke-width="0.950" stroke-linecap="round" stroke-linejoin="round"><path d="M8.500 5.800V8.500a1 1 0 0 1-1 1H1.500a1 1 0 0 1-1-1V2.500a1 1 0 0 1 1-1H4.200"/><path d="M6.300 0.500H9.500V3.700"/><path d="M9.500 0.500L4.800 5.200"/></svg>
<div class="abs" style="left:828px;top:517px;width:35px;height:20.5px;background:#f9fafb;border:1px solid #dfe2e8;border-radius:10.25px;"></div>
<div class="t" style="left:834.35px;top:523px;font-size:9.9px;color:#344054;letter-spacing:0.027px;-webkit-text-stroke:0.200px #344054;">Draft</div>
<div class="t" style="left:926.72px;top:523px;font-size:9.8px;color:#4c6ef5;">0</div>
<div class="t" style="left:1050.62px;top:523px;font-size:9.8px;color:#4c6ef5;">0</div>
<div class="t" style="left:1175.37px;top:524px;font-size:9.9px;color:#667085;letter-spacing:0.019px;">Jan 28 2026, 2:18 PM</div>
<div class="t" style="left:1335.84px;top:524px;font-size:9.9px;color:#667085;letter-spacing:0.011px;">Jan 28 2026, 2:18 PM</div>
<svg style="left:1518px;top:523.3px" width="4.5" height="8" viewBox="0 0 4.5 8" fill="none" stroke="#344054" stroke-width="1" stroke-linecap="round" stroke-linejoin="round"><path d="M0.500 0.500L4 4L0.500 7.500"/></svg>
<svg style="left:1579px;top:521.8px" width="3" height="11" viewBox="0 0 3 11" fill="#1d2939"><circle cx="1.500" cy="1.300" r="1.150"/><circle cx="1.500" cy="5.500" r="1.150"/><circle cx="1.500" cy="9.700" r="1.150"/></svg>
<div class="abs" style="left:477px;top:552px;width:1150px;height:1px;background:#e4e7ec;"></div>
<div class="abs" style="left:498px;top:572px;width:12px;height:12px;background:#fff;border:1px solid #d0d5dd;border-radius:3px;"></div>
<div class="t" style="left:542.27px;top:575px;font-size:11.5px;color:#101828;letter-spacing:0.129px;">New Workflow : 1769441778079</div>
<svg style="left:718.8px;top:572.2px" width="10.5" height="10" viewBox="0 0 10 10" fill="none" stroke="#475467" stroke-width="0.950" stroke-linecap="round" stroke-linejoin="round"><path d="M8.500 5.800V8.500a1 1 0 0 1-1 1H1.500a1 1 0 0 1-1-1V2.500a1 1 0 0 1 1-1H4.200"/><path d="M6.300 0.500H9.500V3.700"/><path d="M9.500 0.500L4.800 5.200"/></svg>
<div class="abs" style="left:828px;top:567px;width:35px;height:20.5px;background:#f9fafb;border:1px solid #dfe2e8;border-radius:10.25px;"></div>
<div class="t" style="left:834.35px;top:574px;font-size:9.9px;color:#344054;letter-spacing:0.027px;-webkit-text-stroke:0.200px #344054;">Draft</div>
<div class="t" style="left:926.72px;top:574px;font-size:9.8px;color:#4c6ef5;">0</div>
<div class="t" style="left:1050.62px;top:574px;font-size:9.8px;color:#4c6ef5;">0</div>
<div class="t" style="left:1175.37px;top:574px;font-size:9.9px;color:#667085;letter-spacing:0.081px;">Jan 26 2026, 10:36 AM</div>
<div class="t" style="left:1335.84px;top:574px;font-size:9.9px;color:#667085;letter-spacing:0.069px;">Jan 26 2026, 10:36 AM</div>
<svg style="left:1518px;top:573.7px" width="4.5" height="8" viewBox="0 0 4.5 8" fill="none" stroke="#344054" stroke-width="1" stroke-linecap="round" stroke-linejoin="round"><path d="M0.500 0.500L4 4L0.500 7.500"/></svg>
<svg style="left:1579px;top:572.2px" width="3" height="11" viewBox="0 0 3 11" fill="#1d2939"><circle cx="1.500" cy="1.300" r="1.150"/><circle cx="1.500" cy="5.500" r="1.150"/><circle cx="1.500" cy="9.700" r="1.150"/></svg>
<div class="abs" style="left:477px;top:602px;width:1150px;height:1px;background:#e4e7ec;"></div>
<div class="abs" style="left:498px;top:623px;width:12px;height:12px;background:#fff;border:1px solid #d0d5dd;border-radius:3px;"></div>
<div class="t" style="left:542.33px;top:626px;font-size:11.3px;color:#101828;letter-spacing:-0.016px;">Recipe - Appointment Confirmation + Reminder</div>
<svg style="left:786.3px;top:622.6px" width="10.5" height="10" viewBox="0 0 10 10" fill="none" stroke="#475467" stroke-width="0.950" stroke-linecap="round" stroke-linejoin="round"><path d="M8.500 5.800V8.500a1 1 0 0 1-1 1H1.500a1 1 0 0 1-1-1V2.500a1 1 0 0 1 1-1H4.200"/><path d="M6.300 0.500H9.500V3.700"/><path d="M9.500 0.500L4.800 5.200"/></svg>
<div class="abs" style="left:828px;top:618px;width:35px;height:20.5px;background:#f9fafb;border:1px solid #dfe2e8;border-radius:10.25px;"></div>
<div class="t" style="left:834.35px;top:624px;font-size:9.9px;color:#344054;letter-spacing:0.027px;-webkit-text-stroke:0.200px #344054;">Draft</div>
<div class="t" style="left:926.72px;top:624px;font-size:9.8px;color:#4c6ef5;">0</div>
<div class="t" style="left:1050.62px;top:624px;font-size:9.8px;color:#4c6ef5;">0</div>
<div class="t" style="left:1175.37px;top:624px;font-size:9.9px;color:#667085;letter-spacing:0.019px;">Jan 20 2026, 4:08 PM</div>
<div class="t" style="left:1335.84px;top:624px;font-size:9.9px;color:#667085;letter-spacing:0.011px;">Jan 20 2026, 4:08 PM</div>
<svg style="left:1518px;top:624.1px" width="4.5" height="8" viewBox="0 0 4.5 8" fill="none" stroke="#344054" stroke-width="1" stroke-linecap="round" stroke-linejoin="round"><path d="M0.500 0.500L4 4L0.500 7.500"/></svg>
<svg style="left:1579px;top:622.6px" width="3" height="11" viewBox="0 0 3 11" fill="#1d2939"><circle cx="1.500" cy="1.300" r="1.150"/><circle cx="1.500" cy="5.500" r="1.150"/><circle cx="1.500" cy="9.700" r="1.150"/></svg>
<div class="abs" style="left:477px;top:653px;width:1150px;height:1px;background:#e4e7ec;"></div>
<div class="abs" style="left:498px;top:673px;width:12px;height:12px;background:#fff;border:1px solid #d0d5dd;border-radius:3px;"></div>
<svg style="left:723.7px;top:673.0px" width="10.5" height="10" viewBox="0 0 10 10" fill="none" stroke="#475467" stroke-width="0.950" stroke-linecap="round" stroke-linejoin="round"><path d="M8.500 5.800V8.500a1 1 0 0 1-1 1H1.500a1 1 0 0 1-1-1V2.500a1 1 0 0 1 1-1H4.200"/><path d="M6.300 0.500H9.500V3.700"/><path d="M9.500 0.500L4.800 5.200"/></svg>
<div class="abs" style="left:828px;top:668px;width:35px;height:20.5px;background:#f9fafb;border:1px solid #dfe2e8;border-radius:10.25px;"></div>
<div class="t" style="left:834.35px;top:675px;font-size:9.9px;color:#344054;letter-spacing:0.027px;-webkit-text-stroke:0.200px #344054;">Draft</div>
<div class="t" style="left:926.72px;top:675px;font-size:9.8px;color:#4c6ef5;">0</div>
<div class="t" style="left:1050.62px;top:675px;font-size:9.8px;color:#4c6ef5;">0</div>
<div class="t" style="left:1175.37px;top:675px;font-size:9.9px;color:#667085;letter-spacing:0.019px;">Jan 20 2026, 4:05 PM</div>
<div class="t" style="left:1335.84px;top:675px;font-size:9.9px;color:#667085;letter-spacing:0.011px;">Jan 20 2026, 4:05 PM</div>
<svg style="left:1518px;top:674.5px" width="4.5" height="8" viewBox="0 0 4.5 8" fill="none" stroke="#344054" stroke-width="1" stroke-linecap="round" stroke-linejoin="round"><path d="M0.500 0.500L4 4L0.500 7.500"/></svg>
<svg style="left:1579px;top:673.0px" width="3" height="11" viewBox="0 0 3 11" fill="#1d2939"><circle cx="1.500" cy="1.300" r="1.150"/><circle cx="1.500" cy="5.500" r="1.150"/><circle cx="1.500" cy="9.700" r="1.150"/></svg>
</div>
<div class="abs" style="left:477px;top:676px;width:1150px;height:1px;background:#d0d5dd;"></div>
<div class="abs" style="left:1157px;top:687px;width:64px;height:27px;background:#fff;border:1px solid #e4e7ec;border-radius:5px;"></div>
<div class="t" style="left:1167.66px;top:696px;font-size:11.2px;color:#98a2b3;letter-spacing:-0.040px;">Previous</div>
<div class="abs" style="left:1231px;top:690px;width:21px;height:21px;background:#fff;border:1.500px solid #155eef;border-radius:3px;"></div>
<div class="t" style="left:1238.85px;top:696px;font-size:10.5px;color:#155eef;">1</div>
<div class="t" style="left:1265.50px;top:696px;font-size:10.5px;color:#344054;">2</div>
<div class="t" style="left:1292.86px;top:696px;font-size:10.5px;color:#344054;">3</div>
<div class="t" style="left:1319.53px;top:696px;font-size:10.5px;color:#344054;">4</div>
<div class="t" style="left:1346.57px;top:696px;font-size:10.5px;color:#344054;">5</div>
<div class="t" style="left:1374.07px;top:696px;font-size:10.5px;color:#344054;">6</div>
<div class="t" style="left:1399.96px;top:696px;font-size:10.5px;color:#344054;">7</div>
<div class="t" style="left:1426.27px;top:697px;font-size:9.5px;color:#667085;letter-spacing:0.221px;">···</div>
<div class="t" style="left:1452.27px;top:696px;font-size:10.8px;color:#344054;">14</div>
<div class="abs" style="left:1478px;top:687px;width:45px;height:27px;background:#fff;border:1px solid #d0d5dd;border-radius:5px;box-shadow:0 1px 2px rgba(16,24,40,.05);"></div>
<div class="t" style="left:1488.79px;top:695px;font-size:11.9px;color:#344054;letter-spacing:-0.168px;">Next</div>
<div class="abs" style="left:1533px;top:687px;width:76px;height:27px;background:#fff;border:1px solid #e4e7ec;border-radius:5px;box-shadow:0 1px 2px rgba(16,24,40,.05);"></div>
<div class="t" style="left:1542.22px;top:696px;font-size:11.5px;color:#344054;letter-spacing:-0.090px;">50 / page</div>
<svg style="left:1593.5px;top:699px" width="6.5" height="4.2" viewBox="0 0 6.5 4.2" fill="none" stroke="#c3c8d2" stroke-width="1" stroke-linecap="round" stroke-linejoin="round"><path d="M0.500 0.500L3.250 3.500L6 0.500"/></svg>
<div class="abs" style="left:1502px;top:245px;width:156px;height:219px;background:rgba(242,243,246,0.0);"></div>
<div class="abs" style="left:1509px;top:250px;width:143.5px;height:210px;background:#fff;border-radius:3px;box-shadow:0 3px 12px rgba(16,24,40,.18),0 0 5px rgba(16,24,40,.12);"></div>
<div class="t" style="left:1535.11px;top:261px;font-size:11.5px;color:#3a4557;letter-spacing:-0.015px;">Edit workflow</div>
<svg style="left:1517px;top:260.5px" width="11" height="11" viewBox="0 0 11 11" fill="none" stroke="#3a4557" stroke-width="1.100" stroke-linecap="round" stroke-linejoin="round"><path d="M1 10.200l.5-2.500L8 1.200a1.150 1.150 0 0 1 1.700 0l.3.300a1.150 1.150 0 0 1 0 1.700L3.500 9.700z"/><path d="M7 2.200l2 2"/></svg>
<div class="t" style="left:1535.13px;top:287px;font-size:11.2px;color:#3a4557;letter-spacing:-0.059px;">Rename workflow</div>
<svg style="left:1517px;top:285.5px" width="10.5" height="10.5" viewBox="0 0 11 11" fill="none" stroke="#3a4557" stroke-width="1.100" stroke-linecap="round" stroke-linejoin="round"><path d="M5.500 2.500H1.500a1 1 0 0 0-1 1v3.500a1 1 0 0 0 1 1h4"/><path d="M8 0.500v10M6.500 0.500h3M6.500 10.500h3"/><path d="M8 2.500h1.500a1 1 0 0 1 1 1V7a1 1 0 0 1-1 1H8"/></svg>
<div class="t" style="left:1535.47px;top:312px;font-size:11.3px;color:#3a4557;letter-spacing:-0.058px;">Open in new tab</div>
<svg style="left:1517px;top:311.5px" width="11" height="11" viewBox="0 0 11 11" fill="none" stroke="#3a4557" stroke-width="1.100" stroke-linecap="round" stroke-linejoin="round"><path d="M9.500 6.500V9.500a1 1 0 0 1-1 1H1.500a1 1 0 0 1-1-1V2.500a1 1 0 0 1 1-1H4.500"/><path d="M7 0.500h3.500V4"/><path d="M10.500 0.500L5 6"/></svg>
<div class="t" style="left:1535.12px;top:338px;font-size:11.4px;color:#3a4557;letter-spacing:-0.064px;">Publish workflow</div>
<svg style="left:1517.5px;top:336.5px" width="10.2" height="10.2" viewBox="0 0 11 11" fill="none" stroke="#3a4557" stroke-width="1.100" stroke-linecap="round" stroke-linejoin="round"><path d="M1.500 0.800v9.400a.4.400 0 0 0 .6.300l7.300-4.700a.4.400 0 0 0 0-.6L2.100.500a.4.400 0 0 0-.6.300z"/></svg>
<div class="t" style="left:1535.11px;top:363px;font-size:11.5px;color:#3a4557;letter-spacing:-0.055px;">Move to folder</div>
<svg style="left:1517px;top:362.0px" width="11" height="11" viewBox="0 0 11 11" fill="none" stroke="#3a4557" stroke-width="1.100" stroke-linecap="round" stroke-linejoin="round"><path d="M0.600 3V2a1 1 0 0 1 1-1h2.300l1.200 1.500h5a1 1 0 0 1 1 1V9a1 1 0 0 1-1 1H1.600a1 1 0 0 1-1-1V3z"/><path d="M0.600 4h10.500"/><path d="M4 7l1.300 1.200L7.500 6"/></svg>
<div class="t" style="left:1535.11px;top:389px;font-size:11.5px;color:#3a4557;letter-spacing:-0.062px;">Duplicate workflow</div>
<svg style="left:1517px;top:387.0px" width="11" height="11" viewBox="0 0 11 11" fill="none" stroke="#3a4557" stroke-width="1.100" stroke-linecap="round" stroke-linejoin="round"><rect x="0.600" y="3.600" width="7" height="7" rx="1.500"/><path d="M3.500 1.500V1.200a.7.700 0 0 1 .7-.7h.5M6.500 0.500h1.200M9.500 0.500h.3a.7.700 0 0 1 .7.700v.5M10.500 3.500v1.200M10.500 6.500v.3a.7.700 0 0 1-.7.700h-.3"/></svg>
<div class="t" style="left:1535.07px;top:414px;font-size:11.5px;color:#3a4557;letter-spacing:-0.053px;">Copy to sub-account</div>
<svg style="left:1517px;top:413.0px" width="11" height="11" viewBox="0 0 11 11" fill="none" stroke="#3a4557" stroke-width="1.100" stroke-linecap="round" stroke-linejoin="round"><rect x="3.600" y="3.600" width="7" height="7" rx="1.500"/><path d="M2 7.500H1.600a1 1 0 0 1-1-1V1.600a1 1 0 0 1 1-1H6.500a1 1 0 0 1 1 1V2"/></svg>
<div class="t" style="left:1535.11px;top:440px;font-size:11.5px;color:#3a4557;letter-spacing:-0.073px;">Delete workflow</div>
<svg style="left:1517.8px;top:438.3px" width="9.8" height="9.8" viewBox="0 0 11 11" fill="none" stroke="#3a4557" stroke-width="1.100" stroke-linecap="round" stroke-linejoin="round"><path d="M0.600 2.500h9.800M3.500 2.500V1.300a.8.800 0 0 1 .8-.8h2.400a.8.800 0 0 1 .8.800v1.200M1.600 2.500l.6 7a1.100 1.100 0 0 0 1.100 1h4.400a1.100 1.100 0 0 0 1.100-1l.6-7"/><path d="M4.300 5v3M6.700 5v3"/></svg>
<div class="abs" style="left:1494px;top:120px;width:146px;height:55px;border:8px solid #ff3131;"></div>
<div class="abs" style="left:1494px;top:237px;width:172px;height:234.5px;border:8px solid #ff3131;"></div>
<div class="abs" style="left:0px;top:472px;width:168px;height:51.5px;border:8px solid #ff3131;"></div>
<svg style="left:0;top:0" width="1920" height="925" viewBox="0 0 1920 925"><g fill="none" stroke="#ff3131" stroke-width="3.200" stroke-linecap="round" stroke-linejoin="round"><path d="M266.400 526Q233 483.500 181.500 502.500"/><path d="M192.600 489L180.500 502.900L198.700 505.700"/></g></svg>
</body>
</html>
